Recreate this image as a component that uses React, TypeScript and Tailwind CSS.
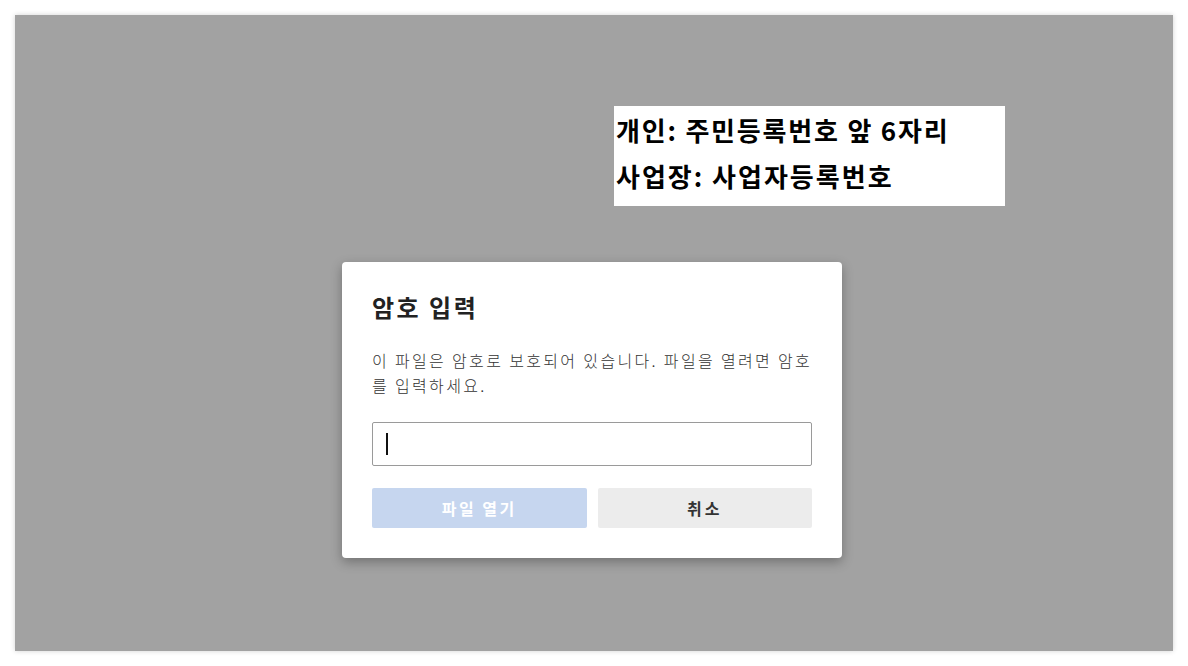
import React from "react";

export default function App() {
  return (
    <div
      className="w-[1188px] h-[666px] bg-white p-[15px] overflow-hidden"
      style={{ fontFamily: '"Noto Sans CJK KR", "Noto Sans", sans-serif' }}
    >
      <div className="relative w-[1158px] h-[636px] bg-[#a2a2a2] shadow-[0_0_5px_rgba(0,0,0,0.18)]">
        <div className="absolute left-[599px] top-[91px] w-[391px] h-[100px] bg-white pl-[2px] pt-[1px]">
          <div className="text-[26px] leading-[46px] font-bold text-black tracking-[1.8px] whitespace-nowrap">
            개인: 주민등록번호 앞 6자리
          </div>
          <div className="text-[26px] leading-[46px] font-bold text-black tracking-[2px] whitespace-nowrap">
            사업장: 사업자등록번호
          </div>
        </div>

        <div className="absolute left-[327px] top-[247px] w-[500px] h-[296px] bg-white rounded-[4px] shadow-[0_4px_12px_rgba(0,0,0,0.3)] px-[30px] pt-[27px] flex flex-col">
          <h2 className="text-[24px] leading-[36px] font-bold text-[#222] tracking-[2.5px]">암호 입력</h2>
          <p className="mt-[23px] text-[16px] leading-[25px] font-light text-[#333] tracking-[2.35px] whitespace-nowrap">
            이 파일은 암호로 보호되어 있습니다. 파일을 열려면 암호
            <br />
            를 입력하세요.
          </p>
          <div className="mt-[24px] h-[44px] border border-[#9a9a9a] rounded-[2px] flex items-center pl-[13px]">
            <div className="w-[2px] h-[22px] bg-[#111]" />
          </div>
          <div className="mt-[22px] flex gap-[11px]">
            <button className="flex-1 h-[40px] rounded-[2px] bg-[#c6d6ef] text-white text-[16px] font-bold tracking-[2.5px]">
              파일 열기
            </button>
            <button className="flex-1 h-[40px] rounded-[2px] bg-[#ececec] text-[#333] text-[16px] font-bold tracking-[3px]">
              취소
            </button>
          </div>
        </div>
      </div>
    </div>
  );
}
